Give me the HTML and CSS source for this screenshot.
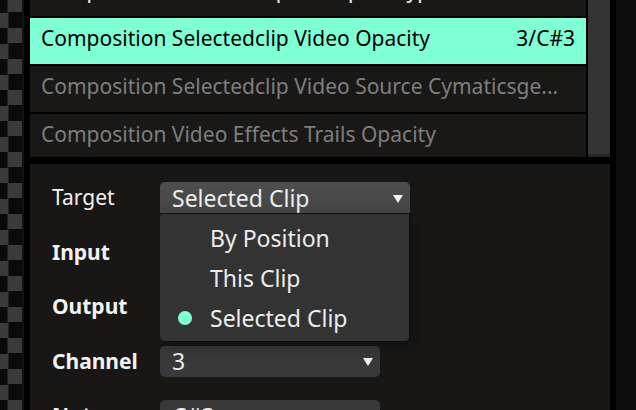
FILE: index.html
```html
<!DOCTYPE html>
<html>
<head>
<meta charset="utf-8">
<link rel="stylesheet" href="styles.css">
</head>
<body>
<div class="checker"></div>
<div class="gutter"></div>
<div class="main">
  <div class="listarea">
    <div class="list">
      <div class="rows">
        <div class="row"><span class="name">Composition Selectedclip Transport Type</span></div>
        <div class="row selected"><span class="name">Composition Selectedclip Video Opacity</span><span class="val">3/C#3</span></div>
        <div class="row dim"><span class="name">Composition Selectedclip Video Source Cymaticsge...</span></div>
        <div class="row dim"><span class="name">Composition Video Effects Trails Opacity</span></div>
      </div>
    </div>
    <div class="scrollbar"><div class="thumb"></div></div>
  </div>
  <div class="panel">
    <div class="form">
      <div class="label">Target</div>
      <div class="field">
        <div class="dropdown open wide"><span>Selected Clip</span><span class="arrow"></span></div>
        <div class="menu">
          <div class="item">By Position</div>
          <div class="item">This Clip</div>
          <div class="item checked"><span class="dot"></span>Selected Clip</div>
        </div>
      </div>
      <div class="label bold">Input</div>
      <div class="field"><div class="dropdown"><span></span><span class="arrow"></span></div></div>
      <div class="label bold">Output</div>
      <div class="field"><div class="dropdown"><span></span><span class="arrow"></span></div></div>
      <div class="label bold">Channel</div>
      <div class="field"><div class="dropdown"><span>3</span><span class="arrow"></span></div></div>
      <div class="label bold">Note</div>
      <div class="field"><div class="dropdown"><span>C#3</span><span class="arrow"></span></div></div>
    </div>
  </div>
</div>
<div class="sep"></div>
<div class="edge"></div>
</body>
</html>
```
FILE: styles.css
```css
html, body {
  margin: 0;
  padding: 0;
}
body {
  width: 636px;
  height: 410px;
  overflow: hidden;
  background: #000;
  display: flex;
  font-family: "Noto Sans", "Open Sans", sans-serif;
  font-size: 21px;
}
.checker {
  width: 22px;
  flex: none;
  background-color: #0a0a0a;
  background-image: conic-gradient(#3a3a3a 25%, #0a0a0a 0 50%, #3a3a3a 0 75%, #0a0a0a 0);
  background-size: 31px 31px;
  background-position: -7.5px -3px;
}
.gutter {
  width: 8px;
  flex: none;
  background: #000;
  border-left: 2px solid #121212;
  box-sizing: border-box;
}
.main {
  width: 580px;
  flex: none;
  display: flex;
  flex-direction: column;
  gap: 7px;
}
.listarea {
  height: 157px;
  flex: none;
  display: flex;
  gap: 2px;
}
.list {
  width: 556px;
  overflow: hidden;
}
.rows {
  margin-top: -30px;
  display: flex;
  flex-direction: column;
  gap: 2px;
}
.row {
  height: 46px;
  flex: none;
  box-sizing: border-box;
  background: #191817;
  color: #f2f2f2;
  display: flex;
  align-items: center;
  justify-content: space-between;
  padding: 0 11px 6px 11px;
  white-space: nowrap;
}
.row.selected {
  background: #7fffd4;
  color: #000;
}
.row.dim {
  color: #7e7e7e;
}
.scrollbar {
  width: 22px;
  background: #262626;
}
.thumb {
  height: 154px;
  background: #333333;
}
.panel {
  flex: 1;
  background: #181716;
  padding: 18px 0 0 22px;
}
.form {
  display: grid;
  grid-template-columns: 108px 1fr;
  grid-auto-rows: 31px;
  row-gap: 23.5px;
  align-items: center;
  color: #f2f2f2;
}
.label {
  line-height: 31px;
}
.label.bold {
  font-weight: 700;
}
.field {
  position: relative;
  height: 31px;
}
.dropdown {
  width: 220px;
  height: 31px;
  box-sizing: border-box;
  background: #393939;
  border-radius: 5px;
  display: flex;
  align-items: center;
  justify-content: space-between;
  padding: 0 7px 0 12px;
  color: #ececec;
  font-size: 23px;
}
.dropdown.wide {
  width: 250px;
}
.dropdown.open {
  background: linear-gradient(#4e4e4e, #454545);
  border-radius: 5px 5px 0 0;
}
.arrow {
  width: 0;
  height: 0;
  border-left: 5px solid transparent;
  border-right: 5px solid transparent;
  border-top: 8px solid #f2f2f2;
  margin-top: 2px;
}
.menu {
  position: absolute;
  top: 31px;
  left: 0;
  width: 250px;
  height: 129px;
  box-sizing: border-box;
  background: #333333;
  border-right: 1px solid #0c0c0c;
  border-bottom: 1px solid #0c0c0c;
  border-top: 1px solid #111;
  border-radius: 3px 0 5px 5px;
  padding-top: 4px;
  box-shadow: 6px 6px 14px rgba(0, 0, 0, 0.25);
  z-index: 2;
}
.item {
  height: 40px;
  line-height: 40px;
  padding-left: 50px;
  position: relative;
  color: #ececec;
  font-size: 23px;
}
.dot {
  position: absolute;
  left: 18px;
  top: 13px;
  width: 14px;
  height: 14px;
  border-radius: 50%;
  background: #7fffd4;
}
.sep {
  width: 6px;
  flex: none;
  background: #000;
}
.edge {
  width: 20px;
  flex: none;
  background: #0d0d0d;
}
```
